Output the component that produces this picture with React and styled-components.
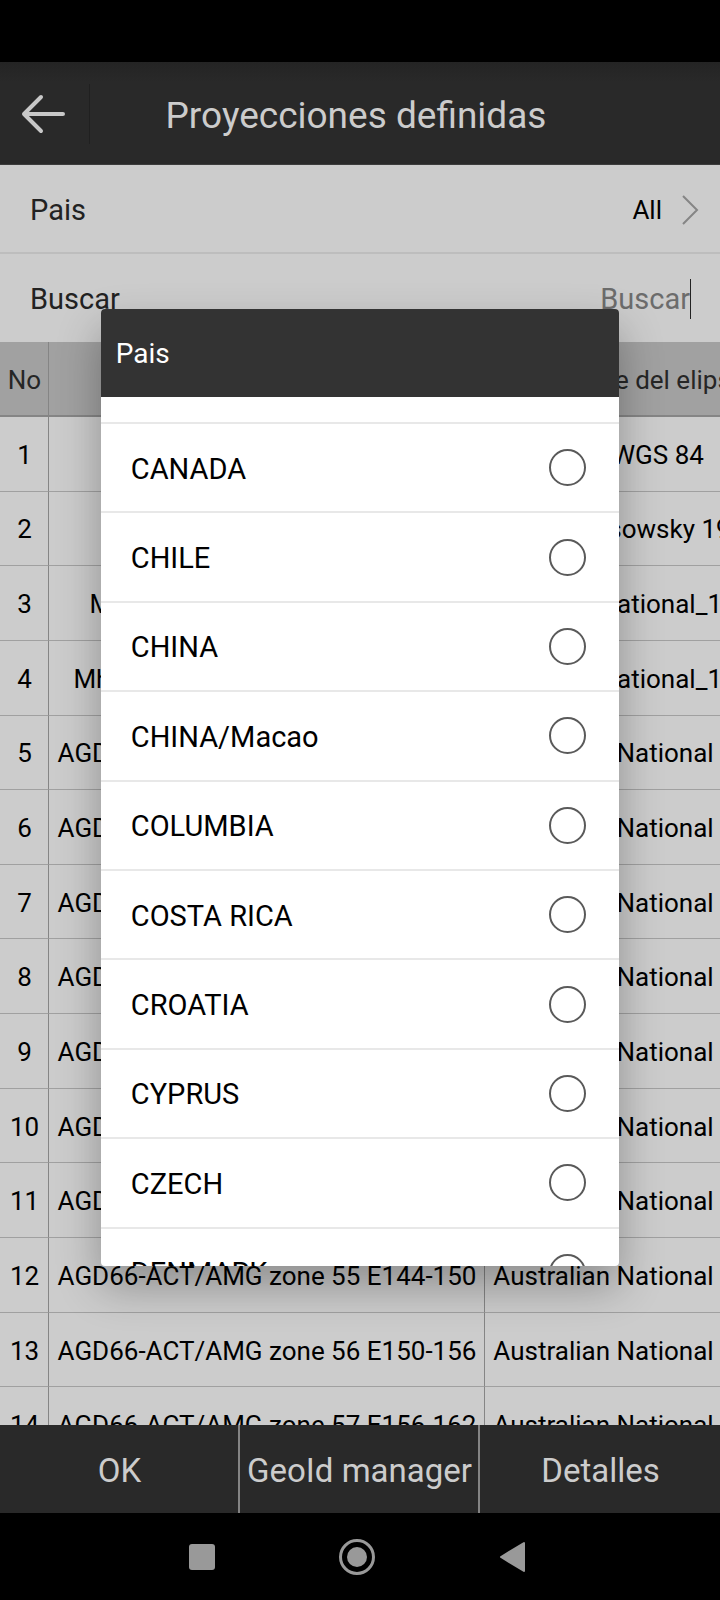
import React from "react";
import styled, { createGlobalStyle } from "styled-components";

const GlobalStyle = createGlobalStyle`
  *, *::before, *::after { box-sizing: border-box; }
  html, body, #root { height: 100%; }
  body {
    margin: 0;
    background: #000;
    font-family: Roboto, "Liberation Sans", sans-serif;
    color: #000;
  }
  button, input { font: inherit; color: inherit; }
`;

const Screen = styled.div`
  display: flex;
  flex-direction: column;
  height: 100vh;
  padding-top: 62px;
  overflow: hidden;
`;

const AppArea = styled.div`
  position: relative;
  flex: 1;
  min-height: 0;
  display: flex;
  flex-direction: column;
  background: #ccc;
`;

const TitleBar = styled.header`
  flex: none;
  display: grid;
  grid-template-columns: 90px 1fr 98px;
  align-items: center;
  height: 103px;
  padding-top: 2px;
  background: linear-gradient(#242424, #292929 20px);
  border-bottom: 1px solid #3c3c3c;
  color: #ccc;
`;

const BackButton = styled.button`
  display: flex;
  align-items: center;
  height: 60px;
  padding: 0 0 0 20px;
  border: 0;
  border-right: 1px solid #202020;
  background: none;
`;

const Title = styled.h1`
  margin: 0;
  padding-top: 3px;
  font-size: 37px;
  line-height: 44px;
  font-weight: 400;
  text-align: center;
  white-space: nowrap;
`;

const Field = styled.div`
  flex: none;
  display: flex;
  align-items: center;
  justify-content: space-between;
  height: ${(p) => (p.$divided ? 89 : 88)}px;
  padding: 2px 20px 0 30px;
  border-bottom: ${(p) => (p.$divided ? "2px solid #bdbdbd" : "0")};
  color: #222;
  font-size: 29px;
  line-height: 40px;
`;

const PickerButton = styled.button`
  display: flex;
  align-items: center;
  gap: 20px;
  padding: 0;
  border: 0;
  background: none;
  color: #000;
  font-size: 26px;
`;

const SearchBox = styled.div`
  display: flex;
  align-items: center;
  padding-right: 9px;
`;

const SearchInput = styled.input`
  width: 240px;
  height: 40px;
  padding: 0;
  border: 0;
  outline: 0;
  background: none;
  text-align: right;
  &::placeholder { color: #6c6c6c; opacity: 1; }
`;

const Caret = styled.span`
  width: 1px;
  height: 40px;
  background: #222;
`;

const TableArea = styled.div`
  flex: 1;
  min-height: 0;
  overflow: hidden;
`;

const Table = styled.table`
  table-layout: fixed;
  width: 831px;
  height: 1120px;
  border-spacing: 0;
  font-size: 26px;
  line-height: 32px;
  white-space: nowrap;
  text-align: center;
`;

const Col = styled.col`
  width: ${(p) => p.$width}px;
`;

const HeadCell = styled.th`
  height: 75px;
  padding: 2px 0 0 1px;
  background: #a1a1a1;
  border-right: 1px solid #858585;
  border-bottom: 2px solid #858585;
  color: #262626;
  font-weight: 400;
`;

const Cell = styled.td`
  padding: 2px 0 0 1px;
  border-right: 1px solid #858585;
  border-bottom: 1px solid #a0a0a0;
`;

const ActionBar = styled.footer`
  flex: none;
  display: grid;
  grid-template-columns: repeat(3, 1fr);
  height: 88px;
  background: #292929;
`;

const ActionButton = styled.button`
  padding: 4px 0 0 1px;
  border: 0;
  border-right: 2px solid #848484;
  background: none;
  color: #ccc;
  font-size: 33px;
  line-height: 40px;
  white-space: nowrap;
  &:last-child { border-right: 0; }
`;

const Overlay = styled.div`
  position: absolute;
  inset: 0;
  display: flex;
  align-items: center;
  justify-content: center;
`;

const Dialog = styled.section`
  display: flex;
  flex-direction: column;
  width: 72%;
  height: calc(100% - 494px);
  border-radius: 4px;
  overflow: hidden;
  background: #fff;
  box-shadow: 0 20px 44px rgba(0, 0, 0, 0.3);
`;

const DialogTitle = styled.h2`
  flex: none;
  display: flex;
  align-items: center;
  height: 88px;
  margin: 0;
  padding: 2px 15px 0;
  background: #333;
  color: #fff;
  font-size: 28px;
  line-height: 36px;
  font-weight: 400;
`;

const Options = styled.div`
  flex: 1;
  min-height: 0;
  padding-top: 25px;
  overflow: hidden;
`;

const OptionList = styled.div`
  display: grid;
  grid-auto-rows: 1fr;
  height: 894px;
`;

const Option = styled.label`
  display: flex;
  align-items: center;
  justify-content: space-between;
  padding: 0 33px 0 30px;
  border-top: 2px solid #e8e8e8;
  font-size: 29px;
  line-height: 36px;
`;

const OptionName = styled.span`
  padding-top: 2px;
`;

const Radio = styled.input`
  appearance: none;
  width: 37px;
  height: 37px;
  margin: 0;
  border: 2px solid #5a5a5a;
  border-radius: 50%;
  background: #fff;
  &:checked { background: #5a5a5a; }
`;

const SystemNav = styled.nav`
  flex: none;
  display: flex;
  align-items: center;
  justify-content: center;
  gap: 115px;
  height: 87px;
  padding-right: 6px;
`;

const NavButton = styled.button`
  display: flex;
  width: 40px;
  height: 40px;
  padding: 0;
  border: 0;
  background: none;
`;

const projections = [
  ["WGS 84", "WGS 84"],
  ["Pulkovo 1942", "Krassowsky 1940"],
  ["Mhast (onshore)/UTM zone 32", "International_1924"],
  ["Mhast (offshore) / UTM zone 32S", "International_1924"],
  ...Array.from({ length: 10 }, (_, i) => [
    `AGD66-ACT/AMG zone ${48 + i} E${102 + i * 6}-${108 + i * 6}`,
    "Australian National Spheroid",
  ]),
];

const countries = [
  "CANADA", "CHILE", "CHINA", "CHINA/Macao", "COLUMBIA",
  "COSTA RICA", "CROATIA", "CYPRUS", "CZECH", "DENMARK",
];

export default function App() {
  return (
    <>
      <GlobalStyle />
      <Screen>
        <AppArea>
          <TitleBar>
            <BackButton aria-label="Atrás">
              <svg width="46" height="40" viewBox="0 0 46 40" fill="none" stroke="#c8c8c8" strokeWidth="4" strokeLinecap="round" strokeLinejoin="round">
                <path d="M21 3 L4 20 L21 37 M4 20 H43" />
              </svg>
            </BackButton>
            <Title>Proyecciones definidas</Title>
          </TitleBar>
          <Field $divided>
            <span id="country-label">Pais</span>
            <PickerButton aria-labelledby="country-label">
              All
              <svg width="18" height="30" viewBox="0 0 18 30" fill="none" stroke="#858585" strokeWidth="2">
                <path d="M1 1 L15 15 L1 29" />
              </svg>
            </PickerButton>
          </Field>
          <Field>
            <label htmlFor="search">Buscar</label>
            <SearchBox>
              <SearchInput id="search" placeholder="Buscar" />
              <Caret />
            </SearchBox>
          </Field>
          <TableArea>
            <Table>
              <colgroup>
                <Col $width={49} />
                <Col $width={436} />
                <Col $width={346} />
              </colgroup>
              <thead>
                <tr>
                  <HeadCell>No</HeadCell>
                  <HeadCell>Nombre</HeadCell>
                  <HeadCell>Nombre del elipsoide</HeadCell>
                </tr>
              </thead>
              <tbody>
                {projections.map(([name, ellipsoid], i) => (
                  <tr key={name}>
                    <Cell>{i + 1}</Cell>
                    <Cell>{name}</Cell>
                    <Cell>{ellipsoid}</Cell>
                  </tr>
                ))}
              </tbody>
            </Table>
          </TableArea>
          <ActionBar>
            <ActionButton>OK</ActionButton>
            <ActionButton>GeoId manager</ActionButton>
            <ActionButton>Detalles</ActionButton>
          </ActionBar>
          <Overlay>
            <Dialog role="dialog" aria-labelledby="dialog-title">
              <DialogTitle id="dialog-title">Pais</DialogTitle>
              <Options>
                <OptionList role="radiogroup" aria-labelledby="dialog-title">
                  {countries.map((country) => (
                    <Option key={country}>
                      <OptionName>{country}</OptionName>
                      <Radio type="radio" name="country" value={country} />
                    </Option>
                  ))}
                </OptionList>
              </Options>
            </Dialog>
          </Overlay>
        </AppArea>
        <SystemNav>
          <NavButton aria-label="Recientes">
            <svg width="40" height="40" fill="#999"><rect x="7" y="7" width="26" height="26" rx="3" /></svg>
          </NavButton>
          <NavButton aria-label="Inicio">
            <svg width="40" height="40" fill="#999">
              <circle cx="20" cy="20" r="16.5" fill="none" stroke="#999" strokeWidth="3" />
              <circle cx="20" cy="20" r="10" />
            </svg>
          </NavButton>
          <NavButton aria-label="Volver">
            <svg width="40" height="40" fill="#999" stroke="#999" strokeWidth="2" strokeLinejoin="round">
              <path d="M9 20 L32 6 V34 Z" />
            </svg>
          </NavButton>
        </SystemNav>
      </Screen>
    </>
  );
}
